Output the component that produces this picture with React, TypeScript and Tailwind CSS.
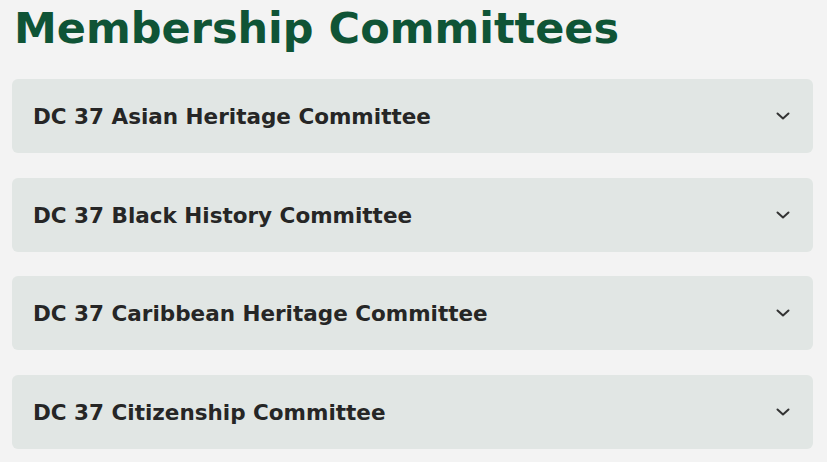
import React from 'react';

const committees = [
    'DC 37 Asian Heritage Committee',
    'DC 37 Black History Committee',
    'DC 37 Caribbean Heritage Committee',
    'DC 37 Citizenship Committee',
];

const Chevron: React.FC = () => (
    <svg width="14" height="8" viewBox="0 0 14 8" fill="none" className="shrink-0">
        <path d="M1.5 1.5 L7 6.5 L12.5 1.5" stroke="#333" strokeWidth="2" strokeLinecap="round" strokeLinejoin="round" />
    </svg>
);

const CommitteeItem: React.FC<{ title: string }> = ({ title }) => (
    <button className="flex items-center justify-between w-full h-[74px] pl-[21px] pr-[23px] rounded-md bg-[#e1e6e4] text-left">
        <span className="text-[21.5px] font-bold text-[#262626] leading-none pt-[2px]">{title}</span>
        <Chevron />
    </button>
);

export default function App() {
    return (
        <div className="min-h-screen w-full bg-[#f3f3f3] px-3 pt-0 font-['DejaVu_Sans',sans-serif]">
            <h1 className="text-[43px] leading-[56px] font-bold text-[#0f5436] pl-[2px]">Membership Committees</h1>
            <div className="flex flex-col gap-[24.5px] w-[801px] mt-[23px]">
                {committees.map(c => (
                    <CommitteeItem key={c} title={c} />
                ))}
            </div>
        </div>
    );
}
